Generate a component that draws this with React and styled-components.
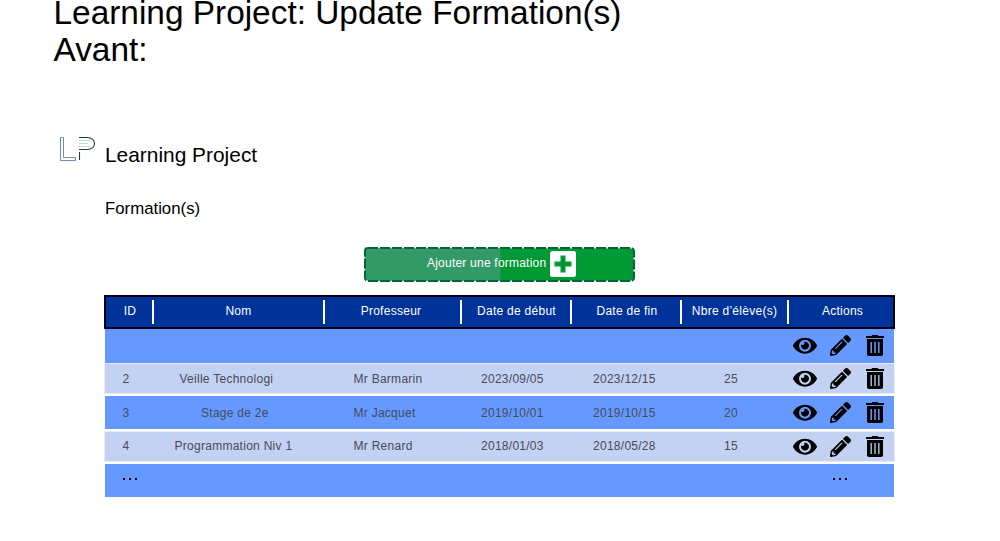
import React from "react";
import styled, { createGlobalStyle } from "styled-components";
import { FaEye, FaPencilAlt } from "react-icons/fa";

const GlobalStyle = createGlobalStyle`
  *, *::before, *::after { box-sizing: border-box; }
  body {
    margin: 0;
    background: #fff;
    color: #000;
    font-family: "Liberation Sans", Arial, sans-serif;
    overflow: hidden;
  }
`;

const Page = styled.main`
  width: 1000px;
  height: 541px;
  overflow: hidden;
  display: flex;
  flex-direction: column;
`;

const Title = styled.h1`
  margin: -6px 0 0 53.5px;
  font-size: 33.4px;
  line-height: 37px;
  font-weight: 400;
  white-space: nowrap;
`;

const Brand = styled.header`
  display: flex;
  align-items: flex-start;
  height: 32px;
  margin: 68px 0 0 59px;
`;

const BrandName = styled.h2`
  margin: 7px 0 0 9px;
  font-size: 20.9px;
  line-height: 24px;
  font-weight: 400;
`;

const Section = styled.h3`
  margin: 31px 0 0 105px;
  font-size: 16.8px;
  line-height: 20px;
  font-weight: 400;
`;

const AddButton = styled.button`
  position: relative;
  display: flex;
  align-items: center;
  width: 271px;
  height: 35px;
  margin: 28px 0 0 364px;
  padding: 0 0 0 63px;
  border: 0;
  background: none;
  color: #fff;
  font: 12px/14px "Liberation Sans", Arial, sans-serif;
  letter-spacing: 0.22px;
  text-align: left;
  white-space: nowrap;
`;

const ButtonFrame = styled.svg`
  position: absolute;
  inset: 0;
`;

const ButtonLabel = styled.span`
  position: relative;
  width: 123px;
  padding-bottom: 3px;
`;

const PlusIcon = styled.svg`
  position: relative;
  margin-top: -1px;
`;

const Table = styled.section`
  width: 791px;
  margin: 13px 0 0 104px;
  font-size: 12px;
  line-height: 14px;
  letter-spacing: 0.27px;
`;

const HeadRow = styled.div`
  display: grid;
  grid-template-columns: 48px 171px 137px 110px 110px 107px 1fr;
  height: 34px;
  padding-top: 3px;
  border: 2px solid #000018;
  background: #003399;
  color: #fff;
`;

const HeadCell = styled.div`
  height: 24px;
  padding: 4px 0 0;
  border-right: ${(p) => (p.$last ? "0" : "2px solid #fff")};
  text-align: center;
  text-indent: ${(p) => p.$nudge || 0}px;
  white-space: nowrap;
`;

const Row = styled.div`
  display: grid;
  grid-template-columns: 48px 183px 127.5px 112px 131px 69px 1fr;
  align-items: center;
  height: ${(p) => p.$height}px;
  margin: 0 1px ${(p) => p.$gap}px 1px;
  padding-left: 17.5px;
  background: ${(p) => (p.$pale ? "#c3d2f2" : "#6699ff")};
  color: #454b58;
  box-shadow: ${(p) => (p.$pale ? "0 0 0 1px #e6edfa" : "none")};
`;

const Cell = styled.span`
  padding-left: ${(p) => p.$indent || 0}px;
  white-space: nowrap;
`;

const Actions = styled.div`
  display: flex;
  align-items: center;
  margin-left: -0.5px;
  color: #000;

  svg { display: block; flex: none; }
  svg:nth-child(2) { margin-left: 13px; }
  svg:nth-child(3) { margin-left: 15px; }
`;

const Dots = styled.div`
  display: flex;
  gap: 4px;
  margin: 0 0 3px ${(p) => p.$left || 0}px;

  i { width: 2px; height: 2px; background: #000; }
`;

const Logo = () => (
  <svg width="37" height="26" viewBox="0 0 37 26" fill="none">
    <path d="M1.5 1.5H4.5V21.5H16.5V24.5H1.5Z" stroke="#6c8db8" />
    <path d="M20 4.5H31M20 7.5H29M20 10.5H31" stroke="#c2d5ef" />
    <path d="M20 1.5H28C38 1.5 38 13.5 28 13.5H20M20.5 16V24" stroke="#30343c" strokeWidth="1.1" />
  </svg>
);

const TrashIcon = ({ slot }) => (
  <svg width="18" height="21" viewBox="0 0 18 21" fill="none">
    <path d="M0 1H5.5L6.2 0H11.8L12.5 1H18V3H0Z" fill="#000" />
    <path d="M1 4H17V19.2Q17 21 15.2 21H2.8Q1 21 1 19.2Z" fill="#000" />
    <path d="M5.2 7V18M9 7V18M12.8 7V18" stroke={slot} strokeWidth="1.5" />
  </svg>
);

const RowActions = ({ slot }) => (
  <Actions>
    <FaEye style={{ width: 24, height: 21.3 }} />
    <FaPencilAlt style={{ width: 21, height: 21 }} />
    <TrashIcon slot={slot} />
  </Actions>
);

const Ellipsis = ({ left }) => (
  <Dots $left={left}><i /><i /><i /></Dots>
);

const heads = [
  ["ID", 2], ["Nom", 0], ["Professeur", -3], ["Date de début", 1],
  ["Date de fin", 2], ["Nbre d’élève(s)", 0], ["Actions", 3],
];

const rows = [
  { height: 33.5, gap: 1.5 },
  { height: 29, gap: 3, pale: true, indent: 9, cells: ["2", "Veille Technologi", "Mr Barmarin", "2023/09/05", "2023/12/15", "25"] },
  { height: 33, gap: 2.5, indent: 30.5, cells: ["3", "Stage de 2e", "Mr Jacquet", "2019/10/01", "2019/10/15", "20"] },
  { height: 29.5, gap: 3, pale: true, indent: 4, cells: ["4", "Programmation Niv 1", "Mr Renard", "2018/01/03", "2018/05/28", "15"] },
];

export default function App() {
  return (
    <Page>
      <GlobalStyle />
      <Title>Learning Project: Update Formation(s)<br />Avant:</Title>
      <Brand>
        <Logo />
        <BrandName>Learning Project</BrandName>
      </Brand>
      <Section>Formation(s)</Section>
      <AddButton>
        <ButtonFrame width="271" height="35" viewBox="0 0 271 35">
          <rect x="1.5" y="1.5" width="268" height="32" rx="3" fill="#009933" />
          <path d="M4 1.5H136.5V33.5H4Q1.5 33.5 1.5 31V4Q1.5 1.5 4 1.5Z" fill="#339966" />
          <rect x="1" y="1" width="269" height="33" rx="3" fill="none" stroke="#006633" strokeWidth="2" strokeDasharray="10.2 1.8" />
        </ButtonFrame>
        <ButtonLabel>Ajouter une formation</ButtonLabel>
        <PlusIcon width="26" height="26" viewBox="0 0 26 26">
          <rect width="26" height="26" rx="2.5" fill="#fff" />
          <path d="M13 4.5V21.5M4.5 13H21.5" stroke="#009933" strokeWidth="5" />
        </PlusIcon>
      </AddButton>
      <Table>
        <HeadRow>
          {heads.map(([name, nudge], i) => (
            <HeadCell key={name} $nudge={nudge} $last={i === 6}>{name}</HeadCell>
          ))}
        </HeadRow>
        {rows.map((row, i) => (
          <Row key={i} $height={row.height} $gap={row.gap} $pale={row.pale}>
            {(row.cells || ["", "", "", "", "", ""]).map((text, j) => (
              <Cell key={j} $indent={j === 1 ? row.indent : 0}>{text}</Cell>
            ))}
            <RowActions slot={row.pale ? "#a9b6d2" : "#6699ff"} />
          </Row>
        ))}
        <Row $height={33} $gap={0}>
          <Ellipsis />
          <Cell /><Cell /><Cell /><Cell /><Cell />
          <Ellipsis left={40} />
        </Row>
      </Table>
    </Page>
  );
}
